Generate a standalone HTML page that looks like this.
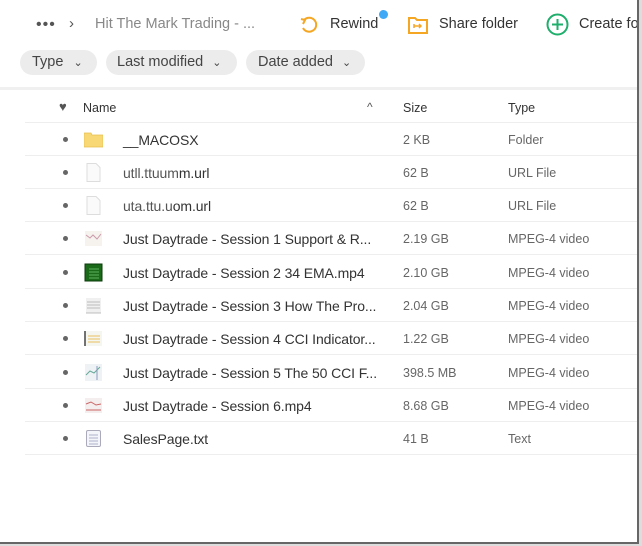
<!DOCTYPE html>
<html><head><style>
*{margin:0;padding:0;box-sizing:border-box}
body{width:642px;height:546px;background:#fff;font-family:"Liberation Sans",sans-serif;position:relative;overflow:hidden;color:#333}
.a{position:absolute;white-space:nowrap}
.pill{position:absolute;top:50px;height:25px;background:#ececec;border-radius:13px;font-size:14.5px;color:#444;line-height:25px;padding-left:12px}
.row{position:absolute;left:25px;width:613px;height:33px;border-bottom:1px solid #eee}
.dot{position:absolute;left:38px;top:14px;width:5px;height:5px;border-radius:50%;background:#666}
.nm{position:absolute;left:98px;top:9px;font-size:14px;color:#333;letter-spacing:-0.1px}
.sz{position:absolute;left:378px;top:10px;font-size:12.5px;color:#666}
.tp{position:absolute;left:483px;top:10px;font-size:12.5px;color:#666}
.ic{position:absolute;left:59px;top:7px;width:19px;height:19px}
</style></head><body>
<div class="a" style="left:36px;top:16px;font-size:16px;color:#555;letter-spacing:1px">•••</div>
<div class="a" style="left:69px;top:15px;font-size:15px;color:#555">›</div>
<div class="a" style="left:95px;top:16px;font-size:14.5px;color:#888">Hit The Mark Trading - ...</div>
<svg class="a" style="left:299px;top:15px" width="20" height="20" viewBox="0 0 20 20"><path d="M5 5 A7 7 0 1 1 4 13" fill="none" stroke="#f5a623" stroke-width="2"/><path d="M2 4 L6 5 L4 9" fill="none" stroke="#f5a623" stroke-width="2"/></svg>
<div class="a" style="left:330px;top:16px;font-size:14.5px;color:#333">Rewind</div>
<div class="a" style="left:379px;top:10px;width:9px;height:9px;border-radius:50%;background:#3fa9f5"></div>
<svg class="a" style="left:408px;top:16px" width="20" height="18" viewBox="0 0 20 18"><path d="M1 2h6l2 2h10v13H1z" fill="none" stroke="#f5a623" stroke-width="2"/><path d="M6 10h7M11 8l2 2-2 2M6 8v4" stroke="#f5a623" stroke-width="1.5" fill="none"/></svg>
<div class="a" style="left:439px;top:16px;font-size:14.5px;color:#333">Share folder</div>
<svg class="a" style="left:546px;top:13px" width="23" height="23" viewBox="0 0 23 23"><circle cx="11.5" cy="11.5" r="10" fill="none" stroke="#1fae6c" stroke-width="2"/><path d="M11.5 6v11M6 11.5h11" stroke="#1fae6c" stroke-width="2"/></svg>
<div class="a" style="left:579px;top:16px;font-size:14.5px;color:#333">Create fo</div>
<div class="pill" style="left:20px;width:77px">Type <span style="font-size:11px;margin-left:6px">⌄</span></div>
<div class="pill" style="left:106px;width:131px;padding-left:11px">Last modified <span style="font-size:11px;margin-left:5px">⌄</span></div>
<div class="pill" style="left:246px;width:119px">Date added <span style="font-size:11px;margin-left:5px">⌄</span></div>
<div class="a" style="left:0;top:87px;width:638px;height:3px;background:#f0f0f0"></div>
<div class="a" style="left:59px;top:99px;font-size:13px;color:#555">♥</div>
<div class="a" style="left:83px;top:101px;font-size:12.5px;color:#333">Name</div>
<div class="a" style="left:367px;top:100px;font-size:12px;color:#555">^</div>
<div class="a" style="left:403px;top:101px;font-size:12.5px;color:#333">Size</div>
<div class="a" style="left:508px;top:101px;font-size:12.5px;color:#333">Type</div>
<div class="a" style="left:25px;top:122px;width:613px;height:1px;background:#eee"></div>

<div class="row" style="top:123px"><div class="dot"></div><svg class="ic" viewBox="0 0 19 19"><path d="M0 3h7l1 2h11v12H0z" fill="#f8d775" stroke="#e8c050" stroke-width=".8"/></svg><div class="nm">__MACOSX</div><div class="sz">2 KB</div><div class="tp">Folder</div></div>
<div class="row" style="top:156px"><div class="dot"></div><svg class="ic" viewBox="0 0 19 19"><path d="M3 .5h9l4 4v14H3z" fill="#fafafa" stroke="#ddd"/></svg><div class="nm" style="color:#555">utll.ttuum<span style="color:#333">m.url</span></div><div class="sz">62 B</div><div class="tp">URL File</div></div>
<div class="row" style="top:189px"><div class="dot"></div><svg class="ic" viewBox="0 0 19 19"><path d="M3 .5h9l4 4v14H3z" fill="#fafafa" stroke="#ddd"/></svg><div class="nm" style="color:#555">uta.ttu.u<span style="color:#333">om.url</span></div><div class="sz">62 B</div><div class="tp">URL File</div></div>
<div class="row" style="top:222px"><div class="dot"></div><svg class="ic" viewBox="0 0 19 19"><rect x="1" y="2" width="17" height="15" fill="#f6f3ee"/><path d="M2 6l4 3 3-3 4 4 4-5" stroke="#c9a" fill="none"/></svg><div class="nm">Just Daytrade - Session 1 Support &amp; R...</div><div class="sz">2.19 GB</div><div class="tp">MPEG-4 video</div></div>
<div class="row" style="top:256px"><div class="dot"></div><svg class="ic" viewBox="0 0 19 19"><rect x="1" y="1" width="17" height="17" fill="#1a6a1a" stroke="#0a3a0a"/><path d="M5 6h10M5 9h10M5 12h10M5 15h10" stroke="#7c7" stroke-width=".8"/></svg><div class="nm">Just Daytrade - Session 2 34 EMA.mp4</div><div class="sz">2.10 GB</div><div class="tp">MPEG-4 video</div></div>
<div class="row" style="top:289px"><div class="dot"></div><svg class="ic" viewBox="0 0 19 19"><rect x="2" y="2" width="15" height="15" fill="#f0f0f0"/><path d="M3 6h13M3 9h13M3 12h13M2 17h15" stroke="#aaa" stroke-width=".8"/></svg><div class="nm">Just Daytrade - Session 3 How The Pro...</div><div class="sz">2.04 GB</div><div class="tp">MPEG-4 video</div></div>
<div class="row" style="top:322px"><div class="dot"></div><svg class="ic" viewBox="0 0 19 19"><rect x="1" y="2" width="17" height="15" fill="#f6f6f0"/><path d="M1 2v15" stroke="#444" stroke-width="1.5"/><path d="M4 7h12M4 10h12M4 13h12" stroke="#e8c060"/></svg><div class="nm">Just Daytrade - Session 4 CCI Indicator...</div><div class="sz">1.22 GB</div><div class="tp">MPEG-4 video</div></div>
<div class="row" style="top:356px"><div class="dot"></div><svg class="ic" viewBox="0 0 19 19"><rect x="1" y="1" width="17" height="17" fill="#eef2f5"/><path d="M2 12l4-4 4 2 6-6" stroke="#6a9" fill="none"/><path d="M13 3v14" stroke="#89b"/></svg><div class="nm">Just Daytrade - Session 5 The 50 CCI F...</div><div class="sz">398.5 MB</div><div class="tp">MPEG-4 video</div></div>
<div class="row" style="top:389px"><div class="dot"></div><svg class="ic" viewBox="0 0 19 19"><rect x="1" y="2" width="17" height="15" fill="#f4eeee"/><path d="M2 8l5-2 5 3 5-1M2 14h15" stroke="#c66" fill="none"/></svg><div class="nm">Just Daytrade - Session 6.mp4</div><div class="sz">8.68 GB</div><div class="tp">MPEG-4 video</div></div>
<div class="row" style="top:422px"><div class="dot"></div><svg class="ic" viewBox="0 0 19 19"><rect x="2.5" y="1.5" width="14" height="16" rx="1.5" fill="#f3f5fb" stroke="#aab"/><path d="M5 6h9M5 9h9M5 12h9M5 15h9" stroke="#99b" stroke-width=".8"/></svg><div class="nm">SalesPage.txt</div><div class="sz">41 B</div><div class="tp">Text</div></div>

<div class="a" style="left:637px;top:0;width:2px;height:544px;background:#666"></div>
<div class="a" style="left:639px;top:0;width:3px;height:546px;background:#ddd"></div>
<div class="a" style="left:0;top:542px;width:639px;height:2px;background:#666"></div>
<div class="a" style="left:0;top:544px;width:642px;height:2px;background:#ddd"></div>
</body></html>
